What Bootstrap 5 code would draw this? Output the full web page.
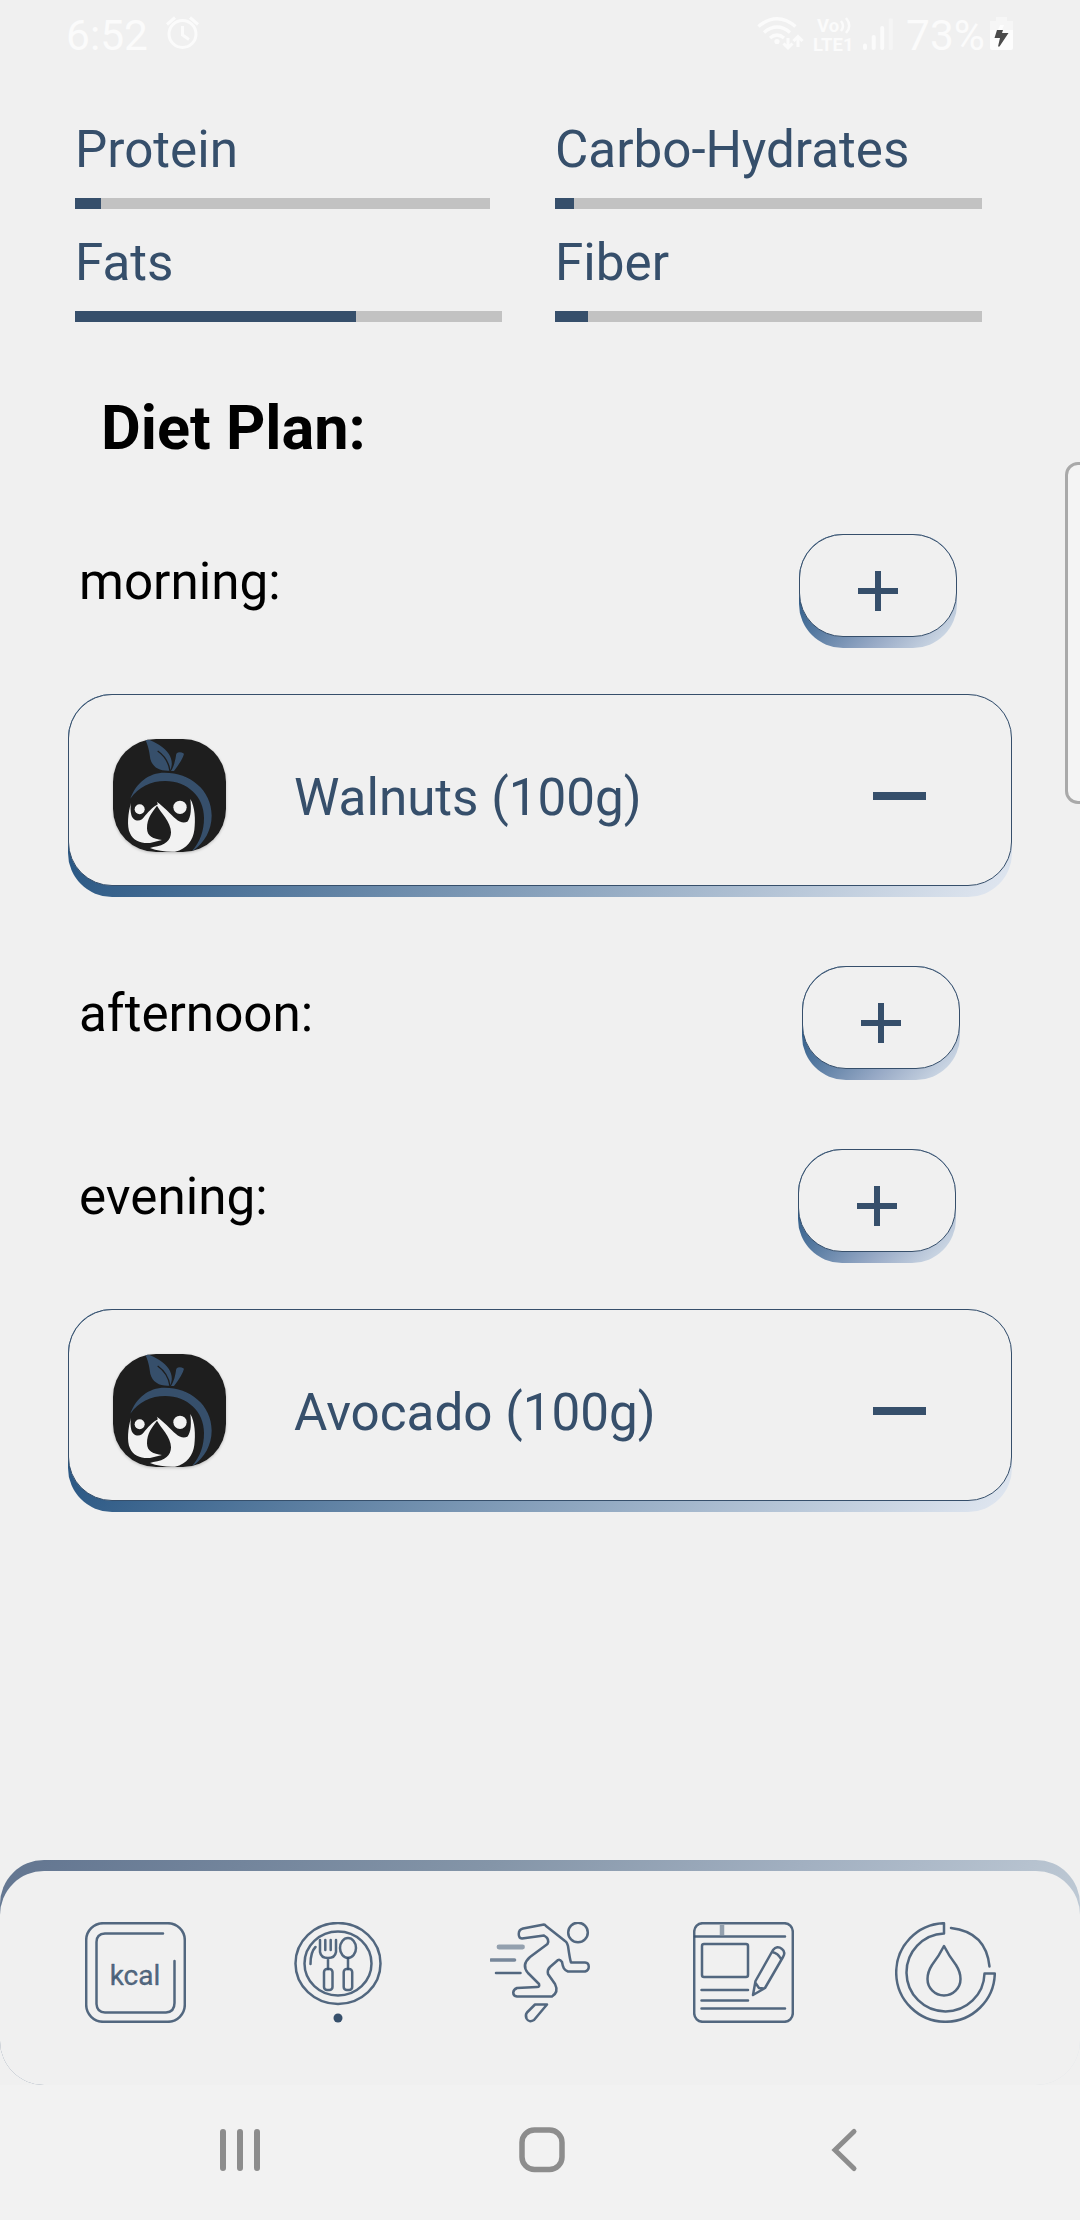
<!DOCTYPE html>
<html lang="en">
<head>
<meta charset="utf-8">
<meta name="viewport" content="width=device-width, initial-scale=1">
<title>Diet Plan</title>
<link href="https://cdn.jsdelivr.net/npm/bootstrap@5.3.0/dist/css/bootstrap.min.css" rel="stylesheet">
<style>
  :root { --navy: #364f6b; }
  body { font-family: Roboto, "Liberation Sans", sans-serif; background: #f0f0f0; color: #000; overflow: hidden; }
  .screen { width: 1080px; height: 2220px; position: relative; }
  .status-bar { height: 118px; padding: 11px 66px 0 66px; color: #fbfbfb; font-size: 42.5px; line-height: 50px; }
  .alarm { margin: 0 auto 0 17px; }
  .volte { font-size: 18.5px; font-weight: 700; line-height: 18.5px; width: 42px; margin: 0 7px 0 8px; padding-top: 6px; flex-shrink: 0; }
  .macros { padding: 0 98px 0 75px; height: 230px; }
  .macro-cell { height: 113px; color: var(--navy); font-size: 51.2px; line-height: 60px; padding-top: 2px; }
  .macro-cell.left { width: 480px; }
  .macro-cell.right { width: 427px; }
  .macro-cell .progress { --bs-progress-height: 11px; --bs-progress-bg: #c2c2c2; --bs-progress-border-radius: 0; --bs-progress-bar-bg: var(--navy); margin-top: 18px; width: 427px; }
  .macro-cell .progress.short { width: 415px; }
  .plan-title { font-size: 61.2px; line-height: 72px; height: 186px; padding: 44px 0 0 101px; margin: 0; font-weight: 700; }
  .meal-row { height: 114px; padding-left: 79px; font-size: 51.2px; line-height: 60px; }
  .meal-name { margin-top: 18px; }
  .raised { border: 1px solid var(--navy); border-radius: 44px; background: #f0f0f0; }
  .lift { border-radius: 44px; padding-bottom: 11px; }
  .add-lift { width: 158px; height: 114px; background: linear-gradient(135deg, #2f5c88 22%, #5579a0 41%, #98aac6 68%, #d3dde8 95%); }
  .add-lift .btn { height: 103px; width: 158px; padding: 10px 0 0 0; display: flex; align-items: center; justify-content: center; }
  .food-lift { width: 944px; height: 203px; margin-left: 68px; background: linear-gradient(135deg, #2c5985 16%, #dee5ef 98%); }
  .food-card { height: 192px; padding: 0 85px 0 44px; color: var(--navy); font-size: 51.2px; }
  .koala { width: 113px; height: 113px; border-radius: 43px; box-shadow: 0 1px 3px rgba(0,0,0,.22); margin-top: 10px; }
  .food-name { margin-left: 68px; margin-top: 16px; }
  .minus-bar { width: 53px; height: 8px; background: var(--navy); margin-top: 12px; }
  .edge-panel { position: absolute; top: 462px; left: 1065px; width: 30px; height: 342px; border: 3px solid #a9a9a9; border-radius: 13px; background: #f4f4f4; }
  .tab-lift { background: linear-gradient(135deg, #627590 0%, #8495a8 38%, #a2b0c1 62%, #c0cbd6 88%, #e4e8ec 100%); border-radius: 44px; height: 225px; padding-top: 11px; margin-top: auto; }
  .tab-strip { background: #f0f0f0; border-radius: 44px; height: 213.5px; padding: 51px 84px 0 85px; }
  .tab-strip svg { width: 101px; height: 101px; display: block; }
  .system-bar { height: 135px; background: #f2f2f2; }
  .ic { fill: none; stroke: var(--navy); stroke-width: 2.5; stroke-opacity: .85; stroke-linecap: round; stroke-linejoin: round; }
  .sys { fill: none; stroke: #8d8d8d; stroke-linecap: round; stroke-linejoin: round; }
</style>
</head>
<body>
<svg width="0" height="0" class="position-absolute">
  <defs>
    <symbol id="koala" viewBox="39 42 339 339">
      <rect x="39" y="42" width="339" height="339" fill="#1e1e1e"/>
      <path fill="#364f6b" d="M134 40C165 50 193 66 206 86C216 101 219 120 210 137C180 139 158 128 151 102C148 82 146 64 134 40Z"/>
      <path fill="none" stroke="#1e1e1e" stroke-width="4" d="M173 78C190 90 206 108 210 138"/>
      <path fill="#364f6b" d="M213 138C222 124 226 106 229 86Q238 78 252 86Q248 104 222 138Z"/>
      <path fill="#364f6b" d="M91 221C108 174 145 143 194 143C270 143 335 195 335 272C335 315 313 352 283 374L276 378C300 350 312 318 312 278C312 215 262 168 196 168C152 168 116 186 91 221Z"/>
      <path fill="#f2f2f2" d="M93 234C84 262 80 305 90 325C100 348 124 356 150 354L186 345C160 342 141 335 141 310C141 280 156 262 171 242C181 262 213 290 213 322C213 346 196 362 160 366L150 369C172 378 200 381 225 380C262 372 279 345 283 315C287 285 285 245 271 222C274 250 274 275 262 290C252 295 238 292 228 282C212 268 190 243 170 230C174 236 174 239 170 240C150 252 138 270 126 283C112 292 98 284 94 270C91 258 91 245 93 234Z"/>
      <circle cx="119" cy="253" r="15" fill="#f2f2f2"/>
      <circle cx="240" cy="247" r="20" fill="#f2f2f2"/>
    </symbol>
    <symbol id="plus" viewBox="0 0 40 40"><path d="M17 0h6v17h17v6H23v17h-6V23H0v-6h17z" fill="#364f6b"/></symbol>
  </defs>
</svg>

<div class="screen d-flex flex-column">
  <header class="status-bar d-flex align-items-start">
    <span>6:52</span>
    <svg class="alarm" width="34" height="44" viewBox="165 13 34 44" fill="none" stroke="#fbfbfb" stroke-width="3">
      <circle cx="182.500" cy="36" r="13.500"/><path d="M182.500 28v9l6.500 4.500M167 26.500l8-7M198 26.500l-8-7"/>
    </svg>
    <svg width="48" height="44" viewBox="757 11 48 44" fill="none" stroke="#fbfbfb" stroke-width="3.400">
      <path d="M758.500 26.500q18.500-15.500 37 0M764 32.500q13-11 26 0M770 38q7-6 14 0"/>
      <circle cx="777" cy="41.500" r="2.600" fill="#fbfbfb" stroke="none"/>
      <path d="M788 38v10M783.500 43.500l4.500 4.500 4.500-4.500M798 47v-10M793.500 41l4.500-4.500 4.500 4.500" stroke-width="3"/>
    </svg>
    <div class="volte">
      <div class="d-flex align-items-start"><span class="ps-1">Vo</span>
        <svg width="14" height="18" viewBox="0 0 14 18" fill="none" stroke="#fbfbfb" stroke-width="2.400"><path d="M2 4q4 5 0 10M7 1q6.500 8 0 15"/></svg></div>
      <div>LTE1</div>
    </div>
    <svg width="32" height="44" viewBox="861 11 32 44" fill="#fbfbfb">
      <rect x="862" y="43.500" width="4" height="6.500" rx="2"/><rect x="870.700" y="35" width="4" height="15" rx="2"/><rect x="879.200" y="26" width="4" height="24" rx="2"/><rect x="887.800" y="18.500" width="4" height="31.500" rx="1" fill="#f5f5f5"/>
    </svg>
    <span style="margin-left:12px">73%</span>
    <svg style="margin-left:5px" width="24" height="44" viewBox="991 11 24 44">
      <path d="M997 17h11v4h6v9h-23v-9h6z" fill="#f6f6f6"/><path d="M991 30h23v18q0 2-2 2h-19q-2 0-2-2z" fill="#fdfdfd"/><path d="M1001 25h4l-2 5h-4z" fill="#fdfdfd"/>
      <path d="M998 30h6l-1 3h6.500l-9 13.500h-1.500l2-8.500h-5.500z" fill="#4c4c4c"/>
    </svg>
  </header>

  <section class="macros d-flex flex-wrap align-content-start">
    <div class="macro-cell left">Protein<div class="progress short"><div class="progress-bar" style="width:6.300%"></div></div></div>
    <div class="macro-cell right">Carbo-Hydrates<div class="progress"><div class="progress-bar" style="width:4.450%"></div></div></div>
    <div class="macro-cell left">Fats<div class="progress"><div class="progress-bar" style="width:65.900%"></div></div></div>
    <div class="macro-cell right">Fiber<div class="progress"><div class="progress-bar" style="width:7.700%"></div></div></div>
  </section>

  <main>
    <h1 class="plan-title">Diet Plan:</h1>
    <div class="meal-row d-flex justify-content-between" style="padding-right:123px">
      <span class="meal-name">morning:</span>
      <div class="lift add-lift"><button class="btn raised" aria-label="Add to morning"><svg width="40" height="40"><use href="#plus"/></svg></button></div>
    </div>
    <div class="lift food-lift" style="margin-top:46px">
      <div class="raised food-card d-flex align-items-center">
        <svg class="koala"><use href="#koala"/></svg><span class="food-name me-auto">Walnuts (100g)</span><span class="minus-bar"></span>
      </div>
    </div>
    <div class="meal-row d-flex justify-content-between" style="padding-right:120px;margin-top:69px">
      <span class="meal-name">afternoon:</span>
      <div class="lift add-lift"><button class="btn raised" aria-label="Add to afternoon"><svg width="40" height="40"><use href="#plus"/></svg></button></div>
    </div>
    <div class="meal-row d-flex justify-content-between" style="padding-right:124px;margin-top:69px">
      <span class="meal-name">evening:</span>
      <div class="lift add-lift"><button class="btn raised" aria-label="Add to evening"><svg width="40" height="40"><use href="#plus"/></svg></button></div>
    </div>
    <div class="lift food-lift" style="margin-top:46px">
      <div class="raised food-card d-flex align-items-center">
        <svg class="koala"><use href="#koala"/></svg><span class="food-name me-auto">Avocado (100g)</span><span class="minus-bar"></span>
      </div>
    </div>
  </main>

  <div class="edge-panel"></div>

  <nav class="tab-lift">
    <div class="tab-strip d-flex justify-content-between align-items-start">
      <!-- calories -->
      <svg viewBox="0 0 101 101" class="ic">
        <rect x="1.200" y="1.200" width="98.600" height="98.600" rx="17"/>
        <path d="M78 11.500H20Q11.500 12 11.500 20V82Q12 90.500 20 90.500H81Q89.500 90 89.500 81V39"/>
        <text x="50" y="63" text-anchor="middle" font-size="28" font-family="Roboto" fill="#364f6b" fill-opacity=".85" stroke="#364f6b" stroke-width=".4">kcal</text>
      </svg>
      <!-- meals -->
      <svg viewBox="0 0 101 101" class="ic">
        <ellipse cx="50" cy="41.500" rx="42.500" ry="40.500"/><ellipse cx="50" cy="41.500" rx="33.500" ry="32"/>
        <path d="M32 18v12q1 6 8 6t8-6V18M37.300 18v10M42.700 18v10M40 36v11M22.500 42q0-12 5-17"/>
        <ellipse cx="60" cy="26" rx="8" ry="10"/><path d="M60 36v11"/>
        <rect x="36" y="47" width="8.500" height="21" rx="3"/><rect x="55.700" y="47" width="8.500" height="21" rx="3"/>
        <circle cx="50" cy="96" r="4.500" fill="#364f6b" stroke="none"/>
      </svg>
      <!-- workout -->
      <svg viewBox="0 0 101 101" class="ic">
        <circle cx="88" cy="10.500" r="9.800"/>
        <path d="M54 2.500L33 6.500C27 8 28 16 32 16.500L54 13.500Q60 17 57.500 22L40 35Q31 43 38 51L49 62Q50 65 47 65L27 66C22 68 22 74 27 74.500H62Q69 70 65 62L58 52Q57 48 60 45L68 38Q70 37 72 40C73 46 74 48 78 49.500H95C100 48 100 41 95 40.500H81Q80 38 78 24Q77 20 75 19L56 4Q55 2.500 54 2.500Z"/>
        <path d="M45 82.500H57L44 98Q39 101 36.500 96.500Q35 93 37 90.500Z"/>
        <path d="M9 25H32.500" stroke-width="4.800" stroke-opacity=".5"/><path d="M1 38H24.500" stroke-width="3.600" stroke-opacity=".65"/><path d="M6 51H30.500"/>
      </svg>
      <!-- journal -->
      <svg viewBox="0 0 101 101" class="ic">
        <rect x="1.200" y="1.200" width="98.600" height="98.600" rx="8.500"/>
        <path d="M2 14.500H92M8.500 68H55M8.500 78.500H55M8.500 86.500H92"/>
        <path d="M29 3V13" stroke-width="4.500" stroke-opacity=".5" stroke-linecap="butt"/>
        <rect x="9" y="22" width="46" height="33" rx="2"/>
        <path d="M60 73L62.500 59L80 28Q84 23 89 27Q93 30 90 35L72 66ZM79 30Q85 31 88 37M62.500 61L66 66L71 66.500"/>
      </svg>
      <!-- water -->
      <svg viewBox="0 0 101 101" class="ic">
        <path d="M49 1.200V11.500A39 39 0 1 0 89.500 51.500H99.800A49.300 49.300 0 1 1 49 1.200Z"/>
        <path d="M56 6Q91 10 94.500 44.500"/>
        <path d="M49 24Q54 34 61 43Q65.500 50 65.500 57A16.500 16.500 0 0 1 32.500 57Q32.500 50 37 43Q44 34 49 24Z"/>
      </svg>
    </div>
  </nav>

  <footer class="system-bar">
    <svg width="1080" height="135" viewBox="0 2085 1080 135" class="sys d-block">
      <path stroke-width="6" d="M223 2132v36M240 2132v36M257 2132v36"/>
      <rect x="522" y="2130" width="40" height="39.500" rx="12.500" stroke-width="5.500"/>
      <path stroke-width="5" d="M854 2131.500L835 2150L854 2168.500" stroke-linejoin="miter"/>
    </svg>
  </footer>
</div>
<script src="https://cdn.jsdelivr.net/npm/bootstrap@5.3.0/dist/js/bootstrap.bundle.min.js"></script>
</body>
</html>
